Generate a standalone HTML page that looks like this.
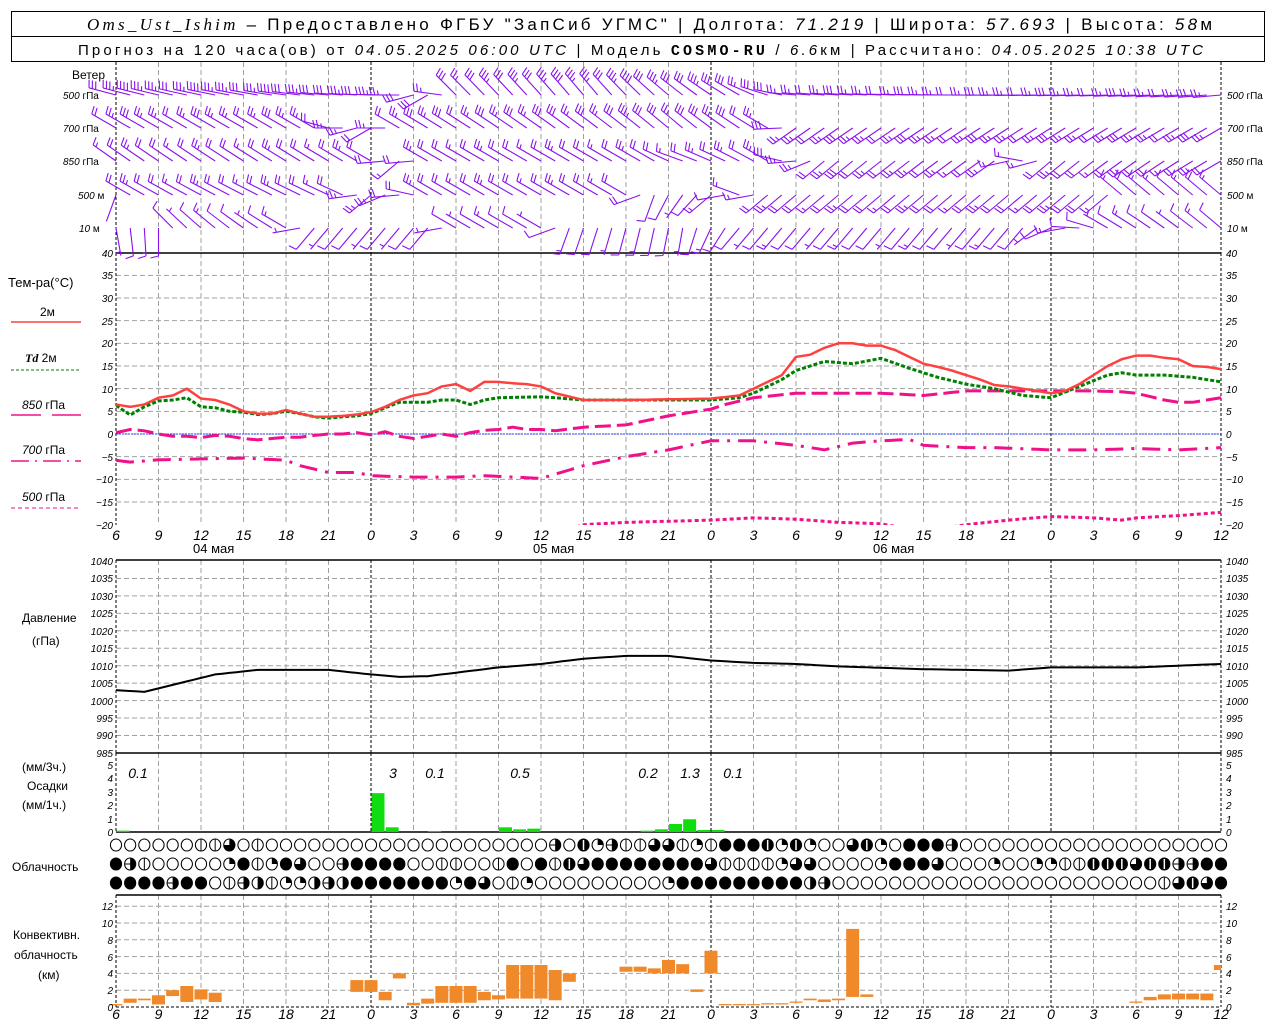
<!DOCTYPE html>
<html><head><meta charset="utf-8"><style>
html,body{margin:0;padding:0;background:#fff}
svg{display:block}
.t{font-family:"Liberation Sans",sans-serif;fill:#000}
.n{font-family:"Liberation Sans",sans-serif;font-style:italic;font-size:10px;fill:#000}
.h{font-family:"Liberation Sans",sans-serif;font-style:italic;font-size:14px;fill:#000;text-anchor:middle}
.s{font-family:"Liberation Serif",serif;font-style:italic}
</style></head><body>
<svg id="S" width="1280" height="1024" viewBox="0 0 1280 1024" xmlns="http://www.w3.org/2000/svg">
<rect width="1280" height="1024" fill="#fff"/>
<defs><clipPath id="tc"><rect x="116" y="253" width="1105" height="272"/></clipPath></defs>
<rect x="11.5" y="11.5" width="1253" height="50" fill="none" stroke="#000"/>
<line x1="11" y1="36.5" x2="1264" y2="36.5" stroke="#000"/>
<text class="t" x="87" y="30" font-size="17" textLength="1125" lengthAdjust="spacing"><tspan class="s">Oms_Ust_Ishim</tspan> – Предоставлено ФГБУ "ЗапСиб УГМС" | Долгота: <tspan font-style="italic">71.219</tspan> | Широта: <tspan font-style="italic">57.693</tspan> | Высота: <tspan font-style="italic">58</tspan>м</text>
<text class="t" x="78" y="55" font-size="15" textLength="1125" lengthAdjust="spacing">Прогноз на 120 часа(ов) от <tspan font-style="italic">04.05.2025 06:00 UTC</tspan> | Модель <tspan font-family="Liberation Mono" font-weight="bold">COSMO-RU</tspan> / <tspan font-style="italic">6.6</tspan>км | Рассчитано: <tspan font-style="italic">04.05.2025 10:38 UTC</tspan></text>
<g id="G"></g>
<g class="t" font-size="12">
<text x="72" y="79">Ветер</text>
<text x="8" y="287" font-size="13">Тем-ра(°C)</text>
<text x="40" y="316">2м</text>
<text x="25" y="362"><tspan class="s" font-weight="bold">Td</tspan>  2м</text>
<text x="22" y="409"><tspan font-style="italic">850</tspan> гПа</text>
<text x="22" y="454"><tspan font-style="italic">700</tspan> гПа</text>
<text x="22" y="501"><tspan font-style="italic">500</tspan> гПа</text>
<text x="22" y="622">Давление</text>
<text x="32" y="645">(гПа)</text>
<text x="22" y="771">(мм/3ч.)</text>
<text x="27" y="790">Осадки</text>
<text x="22" y="809">(мм/1ч.)</text>
<text x="12" y="871">Облачность</text>
<text x="13" y="939">Конвективн.</text>
<text x="14" y="959">облачность</text>
<text x="38" y="979">(км)</text>
<text x="193" y="553" font-size="13">04 мая</text>
<text x="533" y="553" font-size="13">05 мая</text>
<text x="873" y="553" font-size="13">06 мая</text>
</g>
<g class="t" font-size="10">
<text x="63" y="99"><tspan font-style="italic">500</tspan> гПа</text>
<text x="63" y="132"><tspan font-style="italic">700</tspan> гПа</text>
<text x="63" y="165"><tspan font-style="italic">850</tspan> гПа</text>
<text x="78" y="199"><tspan font-style="italic">500</tspan>  м</text>
<text x="79" y="232"><tspan font-style="italic">10</tspan>   м</text>
<text x="1227" y="99"><tspan font-style="italic">500</tspan> гПа</text>
<text x="1227" y="132"><tspan font-style="italic">700</tspan> гПа</text>
<text x="1227" y="165"><tspan font-style="italic">850</tspan> гПа</text>
<text x="1227" y="199"><tspan font-style="italic">500</tspan>  м</text>
<text x="1227" y="232"><tspan font-style="italic">10</tspan>   м</text>
</g>
<g class="n" text-anchor="end">
<text x="113" y="257">40</text><text x="113" y="279">35</text><text x="113" y="302">30</text><text x="113" y="325">25</text><text x="113" y="347">20</text><text x="113" y="370">15</text><text x="113" y="393">10</text><text x="113" y="415">5</text><text x="113" y="438">0</text><text x="113" y="461">−5</text><text x="113" y="483">−10</text><text x="113" y="506">−15</text><text x="113" y="529">−20</text>
<text x="113" y="565">1040</text><text x="113" y="582">1035</text><text x="113" y="600">1030</text><text x="113" y="617">1025</text><text x="113" y="635">1020</text><text x="113" y="652">1015</text><text x="113" y="670">1010</text><text x="113" y="687">1005</text><text x="113" y="705">1000</text><text x="113" y="722">995</text><text x="113" y="739">990</text><text x="113" y="757">985</text>
<text x="113" y="769">5</text><text x="113" y="782">4</text><text x="113" y="796">3</text><text x="113" y="809">2</text><text x="113" y="823">1</text><text x="113" y="836">0</text>
<text x="113" y="910">12</text><text x="113" y="927">10</text><text x="113" y="944">8</text><text x="113" y="961">6</text><text x="113" y="977">4</text><text x="113" y="994">2</text><text x="113" y="1011">0</text>
</g>
<g class="n">
<text x="1226" y="257">40</text><text x="1226" y="279">35</text><text x="1226" y="302">30</text><text x="1226" y="325">25</text><text x="1226" y="347">20</text><text x="1226" y="370">15</text><text x="1226" y="393">10</text><text x="1226" y="415">5</text><text x="1226" y="438">0</text><text x="1226" y="461">−5</text><text x="1226" y="483">−10</text><text x="1226" y="506">−15</text><text x="1226" y="529">−20</text>
<text x="1226" y="565">1040</text><text x="1226" y="582">1035</text><text x="1226" y="600">1030</text><text x="1226" y="617">1025</text><text x="1226" y="635">1020</text><text x="1226" y="652">1015</text><text x="1226" y="670">1010</text><text x="1226" y="687">1005</text><text x="1226" y="705">1000</text><text x="1226" y="722">995</text><text x="1226" y="739">990</text><text x="1226" y="757">985</text>
<text x="1226" y="769">5</text><text x="1226" y="782">4</text><text x="1226" y="796">3</text><text x="1226" y="809">2</text><text x="1226" y="823">1</text><text x="1226" y="836">0</text>
<text x="1226" y="910">12</text><text x="1226" y="927">10</text><text x="1226" y="944">8</text><text x="1226" y="961">6</text><text x="1226" y="977">4</text><text x="1226" y="994">2</text><text x="1226" y="1011">0</text>
</g>
<g class="h" font-size="13">
<text x="138" y="778">0.1</text><text x="393" y="778">3</text><text x="435" y="778">0.1</text><text x="520" y="778">0.5</text><text x="648" y="778">0.2</text><text x="690" y="778">1.3</text><text x="733" y="778">0.1</text>
</g>
<g class="h">
<text x="116" y="540">6</text><text x="158.5" y="540">9</text><text x="201" y="540">12</text><text x="243.5" y="540">15</text><text x="286" y="540">18</text><text x="328.5" y="540">21</text><text x="371" y="540">0</text><text x="413.5" y="540">3</text><text x="456" y="540">6</text><text x="498.5" y="540">9</text><text x="541" y="540">12</text><text x="583.5" y="540">15</text><text x="626" y="540">18</text><text x="668.5" y="540">21</text><text x="711" y="540">0</text><text x="753.5" y="540">3</text><text x="796" y="540">6</text><text x="838.5" y="540">9</text><text x="881" y="540">12</text><text x="923.5" y="540">15</text><text x="966" y="540">18</text><text x="1008.5" y="540">21</text><text x="1051" y="540">0</text><text x="1093.5" y="540">3</text><text x="1136" y="540">6</text><text x="1178.5" y="540">9</text><text x="1221" y="540">12</text>
</g>
<g class="h">
<text x="116" y="1019">6</text><text x="158.5" y="1019">9</text><text x="201" y="1019">12</text><text x="243.5" y="1019">15</text><text x="286" y="1019">18</text><text x="328.5" y="1019">21</text><text x="371" y="1019">0</text><text x="413.5" y="1019">3</text><text x="456" y="1019">6</text><text x="498.5" y="1019">9</text><text x="541" y="1019">12</text><text x="583.5" y="1019">15</text><text x="626" y="1019">18</text><text x="668.5" y="1019">21</text><text x="711" y="1019">0</text><text x="753.5" y="1019">3</text><text x="796" y="1019">6</text><text x="838.5" y="1019">9</text><text x="881" y="1019">12</text><text x="923.5" y="1019">15</text><text x="966" y="1019">18</text><text x="1008.5" y="1019">21</text><text x="1051" y="1019">0</text><text x="1093.5" y="1019">3</text><text x="1136" y="1019">6</text><text x="1178.5" y="1019">9</text><text x="1221" y="1019">12</text>
</g>
</svg>
<script>
(function(){
var G=document.getElementById('G'),out='';
function X(h){return 116+h*14.16667;}
function L(x1,y1,x2,y2,st){out+='<line x1="'+x1+'" y1="'+y1+'" x2="'+x2+'" y2="'+y2+'" '+st+'/>';}
var gd='stroke="#a0a0a0" stroke-width="1" stroke-dasharray="5,3"';
var bd='stroke="#000" stroke-width="1" stroke-dasharray="3,2"';
var panels=[[62,253],[253,525],[560,753],[753,832],[895,1007]];
var hg={1:[],2:[],3:[],4:[]};
for(var t=-15;t<=35;t+=5)hg[1].push(434-t*4.533);
for(var p=1035;p>985;p-=5)hg[2].push(561+(1040-p)*3.49);
for(var k=2;k<=12;k+=2)hg[4].push(1007-k*8.4);
panels.forEach(function(pn,i){
 (hg[i]||[]).forEach(function(y){L(116,y,1221,y,gd);});
 for(var j=0;j<=26;j++){var x=X(j*3);var mid=(j%8==6);
  if(j==0||j==26||mid)L(x,pn[0],x,pn[1],bd);else L(x,pn[0],x,pn[1],gd);}
});
L(116,253,1221,253,'stroke="#000" stroke-width="1.5"');
L(116,560,1221,560,'stroke="#000" stroke-width="1.5"');
L(116,753,1221,753,'stroke="#000" stroke-width="1.5"');
L(116,832,1221,832,'stroke="#000" stroke-width="1.5"');
L(116,895,1221,895,'stroke="#000" stroke-width="1.5"');
L(116,1007,1221,1007,bd);
L(116,434,1221,434,'stroke="#2040ff" stroke-width="1" stroke-dasharray="2,1"');
L(11,322,81,322,'stroke="#ff4040" stroke-width="1.5"');
L(11,370,81,370,'stroke="#008000" stroke-width="1" stroke-dasharray="3,2"');
L(11,415,41,415,'stroke="#f0108a" stroke-width="1.5"');L(52,415,81,415,'stroke="#f0108a" stroke-width="1.5"');
L(11,461,81,461,'stroke="#f0108a" stroke-width="1.5" stroke-dasharray="18,6,2,6"');
L(11,508,81,508,'stroke="#f0108a" stroke-width="1" stroke-dasharray="4,3"');
function interp(a,h){for(var i=0;i<a.length-1;i++){if(h<=a[i+1][0]){var f=(h-a[i][0])/(a[i+1][0]-a[i][0]);return a[i].slice(1).map(function(v,k){return v+(a[i+1][k+1]-v)*f;});}}return a[a.length-1].slice(1);}
function series(a,yf,st){var d='';for(var h=0;h<=78;h+=0.5){var v=interp(a,h)[0];d+=(h?'L':'M')+X(h).toFixed(1)+' '+yf(v).toFixed(1);}out+='<path d="'+d+'" fill="none" '+st+'/>';}
var TY=function(v){return 434-v*4.533;};
var T2=[[0,6.5],[1,6],[2,6.5],[3,8],[4,8.5],[5,10],[6,7.8],[7,7.5],[8,6.5],[9,5],[10,4.5],[11,4.5],[12,5.3],[13,4.5],[14,3.8],[15,3.8],[16,4],[17,4.3],[18,4.8],[19,6],[20,7.5],[21,8.5],[22,9],[23,10.5],[24,11],[25,9.5],[26,11.5],[27,11.5],[28,11.2],[29,11],[30,10.5],[31,9],[33,7.5],[36,7.5],[42,7.8],[44,8.5],[45,10],[47,13],[48,17],[49,17.5],[50,19],[51,20],[52,20],[53,19.5],[54,19.5],[55,18.5],[56,17],[57,15.5],[58,14.8],[59,14],[60,13],[61,12],[62,10.8],[63,10.5],[64,10],[65,9.5],[66,9],[67,9.5],[68,11],[69,13],[70,15],[71,16.5],[72,17.3],[73,17.3],[74,16.8],[75,16.5],[76,15],[77,14.8],[78,14.3]];
var TD=[[0,6.3],[1,4.2],[2,6],[3,7.3],[4,7.5],[5,8],[6,6],[7,5.8],[8,5],[9,4.8],[10,4.3],[11,4.5],[12,5],[13,4.5],[14,3.8],[15,3.5],[16,3.8],[17,4],[18,4.5],[19,5.8],[20,7],[21,7],[22,7],[23,7.5],[24,7.5],[25,6.5],[26,7.5],[27,8],[30,8.2],[31,8],[33,7.5],[42,7.5],[44,8],[45,9],[47,12],[48,14],[50,16],[52,15.5],[54,16.7],[56,14.5],[58,12.5],[60,11],[62,10],[64,8.5],[66,8],[68,10.5],[70,13],[71,13.5],[72,13],[74,13],[76,12.5],[78,11.5]];
var T85=[[0,0.3],[1,1],[2,0.7],[3,0],[4,-0.5],[5,-0.5],[6,-0.8],[7,-0.3],[8,-0.5],[9,-1],[10,-1.3],[11,-1],[12,-0.7],[13,-0.7],[14,-0.3],[15,0],[16,0],[17,0.3],[18,-0.2],[19,0.5],[20,-0.5],[21,-1],[22,-0.5],[23,0],[24,-0.5],[25,0.3],[26,0.8],[27,1],[28,1.5],[29,1],[30,1],[31,0.7],[33,1.5],[36,2],[39,4],[42,5.5],[43,6.5],[45,8],[48,9],[51,9],[54,9],[57,8.5],[60,9.5],[63,9.5],[66,9.5],[69,9.5],[71,9.3],[72,9],[74,7.5],[75,7],[76,7],[78,8]];
var T70=[[0,-5.8],[1,-6.2],[3,-5.7],[6,-5.5],[9,-5.3],[12,-5.8],[13,-7],[15,-8.5],[17,-8.5],[18,-9.2],[21,-9.5],[24,-9.5],[26,-9.2],[28,-9.5],[30,-9.8],[33,-7],[36,-5],[39,-3.5],[42,-1.5],[45,-1.5],[48,-2.5],[50,-3.5],[52,-2],[54,-1.5],[56,-1.2],[57,-2.5],[60,-3],[62,-3],[66,-3.5],[69,-3.5],[72,-3.2],[75,-3.5],[78,-3]];
var T50=[[0,-25],[30,-23],[33,-20],[36,-19.5],[42,-19],[45,-18.5],[48,-18.8],[51,-19.5],[54,-19.8],[56,-21],[58,-21],[60,-20],[63,-19],[66,-18.2],[69,-18.5],[71,-19],[72,-18.5],[75,-18],[78,-17.3]];
out+='<g clip-path="url(#tc)">';
series(T50,TY,'stroke="#f0108a" stroke-width="3" stroke-dasharray="4,3"');
series(T70,TY,'stroke="#f0108a" stroke-width="3" stroke-dasharray="18,8,3,8"');
series(T85,TY,'stroke="#f0108a" stroke-width="3" stroke-dasharray="16,6"');
series(TD,TY,'stroke="#008000" stroke-width="3" stroke-dasharray="4,2"');
series(T2,TY,'stroke="#ff4040" stroke-width="2.5"');
out+='</g>';
var PR=[[0,1003],[2,1002.5],[4,1004.5],[7,1007.5],[10,1008.8],[15,1008.8],[18,1007.5],[20,1006.8],[22,1007],[24,1008],[27,1009.5],[30,1010.5],[33,1012],[36,1012.8],[39,1012.8],[42,1011.5],[45,1010.8],[48,1010.5],[51,1009.8],[57,1009],[63,1008.6],[66,1009.5],[72,1009.5],[78,1010.5]];
series(PR,function(p){return 561+(1040-p)*3.49;},'stroke="#000" stroke-width="2"');
[[0,0.1],[18,2.9],[19,0.35],[22,0.05],[27,0.35],[28,0.2],[29,0.25],[37,0.1],[38,0.2],[39,0.6],[40,0.95],[41,0.15],[42,0.15]].forEach(function(b){var h=b[1]*13.4;out+='<rect x="'+(X(b[0])+0.5)+'" y="'+(832-h)+'" width="13" height="'+h+'" fill="#10dd10"/>';});
var CV=[[0,0.2,0.35],[1,0.5,1.0],[2,0.8,1.0],[3,0.3,1.4],[4,1.3,2.0],[5,0.6,2.5],[6,0.9,2.1],[7,0.6,1.7],[17,1.8,3.2],[18,1.8,3.2],[19,0.8,1.8],[20,3.4,4.0],[21,0.2,0.5],[22,0.4,1.0],[23,0.5,2.5],[24,0.5,2.5],[25,0.5,2.5],[26,0.8,1.8],[27,0.9,1.4],[28,1,5],[29,1,5],[30,1,5],[31,0.8,4.4],[32,3,4],[36,4.2,4.8],[37,4.2,4.8],[38,4.0,4.6],[39,4.0,5.6],[40,4.0,5.1],[41,1.8,2.1],[42,4.0,6.7],[43,0.2,0.35],[44,0.2,0.35],[45,0.2,0.35],[46,0.3,0.45],[47,0.3,0.45],[48,0.5,0.65],[49,0.8,1.0],[50,0.6,0.9],[51,0.8,1.0],[52,1.2,9.3],[53,1.2,1.5],[72,0.5,0.65],[73,0.8,1.2],[74,0.9,1.5],[75,0.9,1.6],[76,0.9,1.6],[77,0.8,1.6],[78,4.4,5.0]];
CV.forEach(function(b){var y1=1007-b[2]*8.4,y2=1007-b[1]*8.4;var x=X(b[0])-6.5,w=13;if(b[0]==78){x=X(77.5);w=X(78)-x;}out+='<rect x="'+x+'" y="'+y1+'" width="'+w+'" height="'+Math.max(1,y2-y1)+'" fill="#f0892a"/>';});
var R=[
"000000116010000000000000000000050725116612188872720067208885000000000000000000000",
"851000002812860058888001100180817688888888611112660000288860002002211777677558800",
"888858801541224548888888286012000000000288888888845000000000000000000000001676800"];
var rys=[845,864,883];
R.forEach(function(row,ri){for(var h=0;h<=78;h++){var c=+row[h]||0;var cx=X(h),cy=rys[ri],r=6,rx=5.6;
 var f='fill="#000"';
 out+='<ellipse cx="'+cx+'" cy="'+cy+'" rx="'+rx+'" ry="'+r+'" fill="'+(c>=7?'#000':'#fff')+'" stroke="#000" stroke-width="1"/>';
 if(c==2||c==3)out+='<path d="M'+cx+' '+cy+'L'+cx+' '+(cy-r)+'A'+rx+' '+r+' 0 0 1 '+(cx+rx)+' '+cy+'Z" '+f+'/>';
 if(c==4||c==5)out+='<path d="M'+cx+' '+(cy-r)+'A'+rx+' '+r+' 0 0 1 '+cx+' '+(cy+r)+'Z" '+f+'/>';
 if(c==6)out+='<path d="M'+cx+' '+cy+'L'+cx+' '+(cy-r)+'A'+rx+' '+r+' 0 1 1 '+(cx-rx)+' '+cy+'Z" '+f+'/>';
 if(c==1||c==3)L(cx,cy-r,cx,cy+r,'stroke="#000"');
 if(c==5)L(cx-rx,cy,cx+rx,cy,'stroke="#000"');
 if(c==7)L(cx,cy-r+1,cx,cy+r-1,'stroke="#fff" stroke-width="1.5"');
}});
var lv=[[95,[[0,285,35],[10,280,35],[20,270,30],[22,240,25],[24,315,30],[34,320,35],[44,300,30],[48,275,25],[60,270,25],[70,268,25],[78,265,25]]],
[128,[[0,300,25],[14,300,25],[18,240,20],[20,300,25],[40,310,30],[46,300,25],[48,235,25],[78,240,25]]],
[161,[[0,305,20],[18,300,20],[20,230,20],[22,300,20],[38,300,20],[40,290,20],[46,300,25],[50,230,25],[62,235,20],[64,280,15],[66,230,20],[78,240,20]]],
[195,[[0,200,5],[1,300,20],[16,295,20],[18,230,25],[22,300,20],[36,300,20],[38,200,10],[42,230,10],[44,290,15],[46,230,20],[70,230,20],[71,310,15],[78,310,15]]],
[228,[[0,170,10],[3,180,10],[4,315,10],[12,300,10],[14,220,8],[22,220,8],[24,300,10],[30,300,10],[32,200,10],[40,190,10],[44,220,10],[64,220,10],[70,300,10],[78,310,10]]]];
var ws='stroke="#8a10ee" stroke-width="1.1" fill="none"';
lv.forEach(function(l){var y0=l[0];for(var h=0;h<=78;h++){var v=interp(l[1],h);var d=v[0]*Math.PI/180,s=v[1]+((h*7)%5-2)*2;
 var ux=Math.sin(d),uy=-Math.cos(d),px=-uy,py=ux,Ln=28;var bx=X(h),by=y0,tx=bx+ux*Ln,ty=by+uy*Ln;
 var dd='M'+bx.toFixed(1)+' '+by+'L'+tx.toFixed(1)+' '+ty.toFixed(1);var pos=0;
 while(s>=47.5){var ax=tx-ux*pos,ay=ty-uy*pos;dd+='M'+ax.toFixed(1)+' '+ay.toFixed(1)+'L'+(ax+px*8+ux*1).toFixed(1)+' '+(ay+py*8+uy*1).toFixed(1)+'L'+(ax-ux*5).toFixed(1)+' '+(ay-uy*5).toFixed(1);pos+=7;s-=50;}
 while(s>=7.5){var ax=tx-ux*pos,ay=ty-uy*pos;dd+='M'+ax.toFixed(1)+' '+ay.toFixed(1)+'l'+(px*8+ux*2).toFixed(1)+' '+(py*8+uy*2).toFixed(1);pos+=3.5;s-=10;}
 if(s>=2.5){if(pos==0)pos=4;var ax=tx-ux*pos,ay=ty-uy*pos;dd+='M'+ax.toFixed(1)+' '+ay.toFixed(1)+'l'+(px*4.5+ux*1).toFixed(1)+' '+(py*4.5+uy*1).toFixed(1);}
 out+='<path d="'+dd+'" '+ws+'/>';}});
G.innerHTML=out;
})();
</script>
</body></html>
